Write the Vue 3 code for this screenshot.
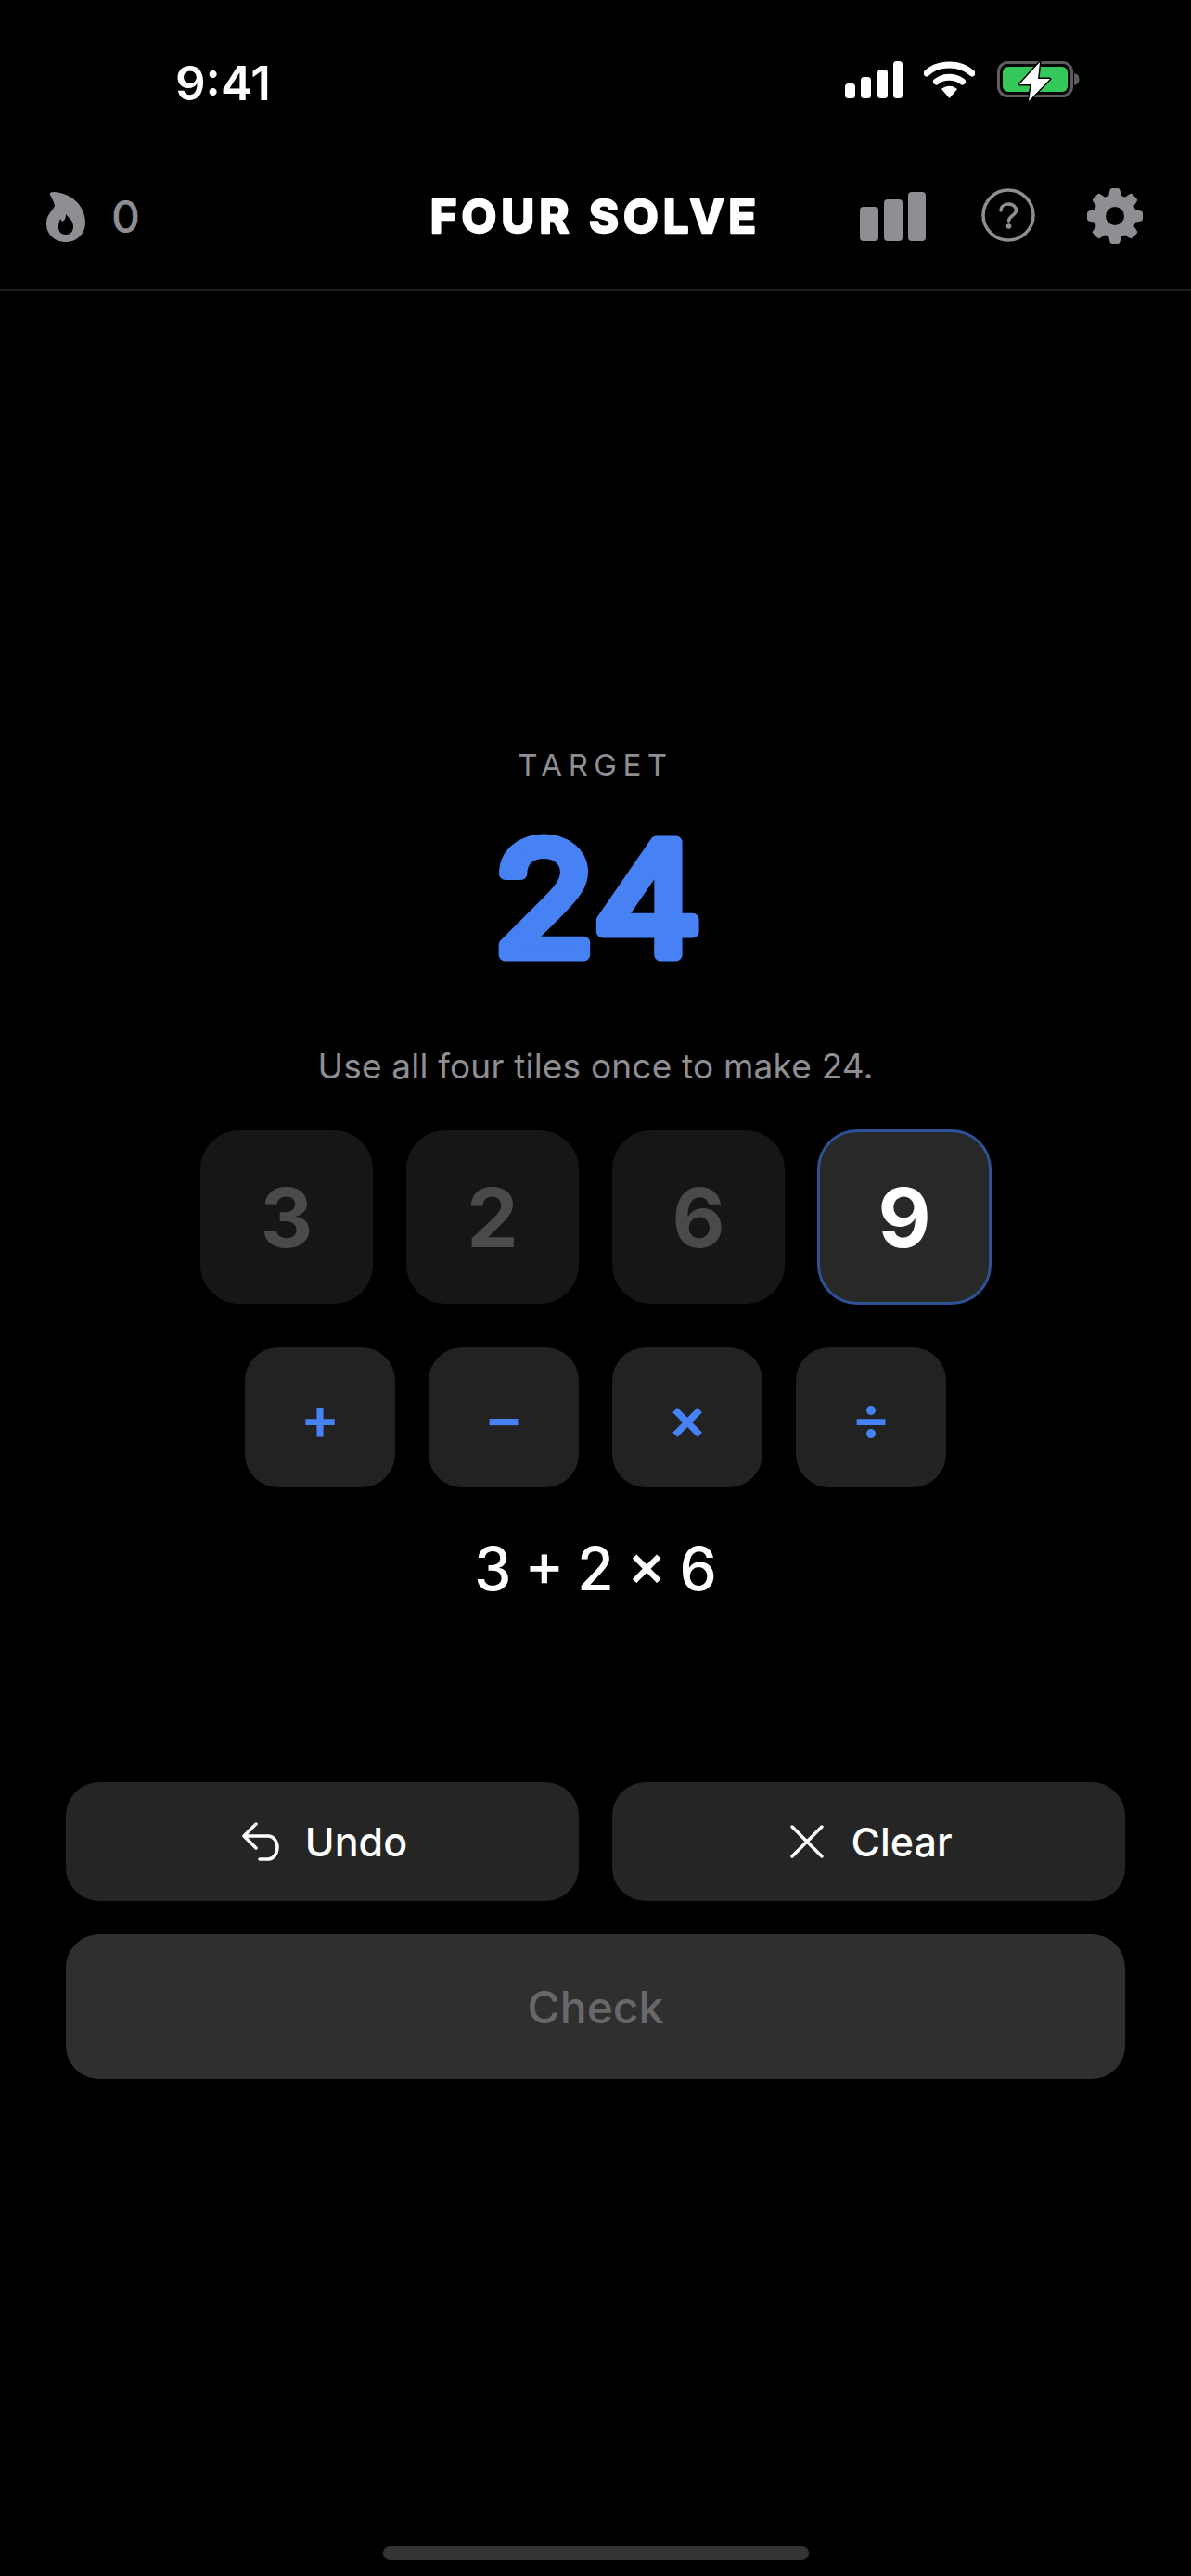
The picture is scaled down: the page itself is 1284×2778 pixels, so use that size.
<template>
  <div class="page">
    <!-- Status bar -->
    <div class="status-bar">
      <span class="clock">9:41</span>
      <div class="status-icons">
        <svg class="signal" width="62" height="40" viewBox="0 0 62 40">
          <rect x="0" y="24" width="11" height="16" rx="3.5" fill="#fff" />
          <rect x="17" y="17" width="11" height="23" rx="3.5" fill="#fff" />
          <rect x="35" y="9" width="11" height="31" rx="3.5" fill="#fff" />
          <rect x="52" y="0" width="10" height="40" rx="3.5" fill="#fff" />
        </svg>
        <svg class="wifi" width="55" height="40" viewBox="0 0 55 40">
          <path d="M3 13 C16 1 39 1 52 13" fill="none" stroke="#fff" stroke-width="7" stroke-linecap="round" />
          <path d="M13.5 22 C21 15.5 34 15.5 41.5 22" fill="none" stroke="#fff" stroke-width="7" stroke-linecap="round" />
          <path d="M19 30 C24 25.500 31 25.500 36 30 L27.500 40 Z" fill="#fff" />
        </svg>
        <svg class="battery" width="90" height="47" viewBox="0 0 90 47">
          <rect x="1.500" y="3.500" width="79" height="36" rx="10" fill="none" stroke="#5c5c5c" stroke-width="3" />
          <rect x="6" y="8" width="70" height="27" rx="6" fill="#34c759" />
          <path d="M83 15 C87 16 88.500 18 88.500 21.500 C88.500 25 87 27 83 28 Z" fill="#5c5c5c" />
          <path d="M46 3 L24 27 H37 L34 45 L57 21 H44 Z" fill="#fff" stroke="#000" stroke-width="3" stroke-linejoin="round" paint-order="stroke" />
        </svg>
      </div>
    </div>

    <!-- Header -->
    <header class="top-bar">
      <div class="streak">
        <svg width="42" height="54" viewBox="0 0 42 54">
          <path fill-rule="evenodd" fill="#8e8e93" d="M4 3 C3 1 5 0 8 0 C26 1 42 14 42 33 C42 46 32 54 21 54 C9 54 0 46 0 34 C0 25 6 21 9 15 C8 10 6 7 4 3 Z M21 46 C26 46 29 43 29 37 C29 31 25 29 21 24 C21 30 19 31 17 32 C16 31 16 30 15 29 C14 32 13 34 13 38 C13 43 16 46 21 46 Z" />
        </svg>
        <span class="streak-count">0</span>
      </div>
      <svg class="title-svg" width="380" height="64" viewBox="0 0 380 64">
        <text class="title-text" x="190" y="52" text-anchor="middle">FOUR SOLVE</text>
      </svg>
      <div class="top-actions">
        <svg class="bars" width="71" height="53" viewBox="0 0 71 53">
          <rect x="0" y="16" width="20" height="37" rx="4" fill="#8e8e93" />
          <rect x="26" y="8" width="20" height="45" rx="4" fill="#8e8e93" />
          <rect x="52" y="0" width="19" height="53" rx="4" fill="#8e8e93" />
        </svg>
        <svg class="help" width="58" height="58" viewBox="0 0 58 58">
          <circle cx="29" cy="29" r="27" fill="none" stroke="#8e8e93" stroke-width="3.500" />
          <path d="M21 24 C21 19.500 25 17 29.500 17 C34 17 37.500 20 37.500 24 C37.500 29 30 29.500 29.500 35" fill="none" stroke="#8e8e93" stroke-width="3.500" stroke-linecap="round" />
          <circle cx="29.500" cy="41" r="2.800" fill="#8e8e93" />
        </svg>
        <svg class="gear" width="60" height="60" viewBox="0 0 60 60">
          <g fill="#8e8e93">
            <path v-for="a in gearTeeth" :key="a" d="M22 14 L24.500 2 Q25 0 27 0 H33 Q35 0 35.500 2 L38 14 Z" :transform="`rotate(${a} 30 30)`" />
          </g>
          <circle cx="30" cy="30" r="16.500" fill="none" stroke="#8e8e93" stroke-width="13" />
        </svg>
      </div>
    </header>

    <!-- Game -->
    <main class="game">
      <div class="target-label">TARGET</div>
      <svg class="target-svg" width="300" height="240" viewBox="0 0 300 240">
        <text class="target-text" x="152" y="184" text-anchor="middle" textLength="226" lengthAdjust="spacingAndGlyphs">24</text>
      </svg>
      <p class="hint">Use all four tiles once to make 24.</p>

      <div class="tiles">
        <div
          v-for="tile in tiles"
          :key="tile.value"
          class="tile"
          :class="{ used: tile.used }"
        >
          {{ tile.value }}
        </div>
      </div>

      <div class="ops">
        <div v-for="op in ops" :key="op" class="op">{{ op }}</div>
      </div>

      <div class="expression">3 + 2 × 6</div>

      <div class="controls">
        <button class="ctrl">
          <svg width="40" height="42" viewBox="0 0 40 42">
            <path d="M15 2 L2 15 L15 28 M2 15 H28 C34 15 38 21 38 27 C38 34 34 40 28 40 H19" fill="none" stroke="#fff" stroke-width="3.500" stroke-linecap="round" stroke-linejoin="round" />
          </svg>
          Undo
        </button>
        <button class="ctrl">
          <svg width="38" height="38" viewBox="0 0 38 38">
            <path d="M3 3 L35 35 M35 3 L3 35" fill="none" stroke="#fff" stroke-width="3.500" stroke-linecap="round" />
          </svg>
          Clear
        </button>
      </div>
      <button class="check">Check</button>
    </main>

    <div class="home-bar"></div>
  </div>
</template>

<script setup>
const tiles = [
  { value: 3, used: true },
  { value: 2, used: true },
  { value: 6, used: true },
  { value: 9, used: false }
]
const ops = ['+', '−', '×', '÷']
const gearTeeth = [0, 45, 90, 135, 180, 225, 270, 315]
</script>

<style>
html,
body {
  background: #000;
}
</style>

<style scoped>
.page {
  width: 1284px;
  height: 2778px;
  background: #000;
  color: #fff;
  font-family: Inter, "Liberation Sans", sans-serif;
  display: flex;
  flex-direction: column;
  overflow: hidden;
}
.status-bar {
  height: 132px;
  box-sizing: border-box;
  padding: 60px 119px 0 189px;
  display: flex;
  justify-content: space-between;
  align-items: flex-start;
}
.clock {
  font-size: 51px;
  font-weight: 600;
  line-height: 60px;
}
.status-icons {
  display: flex;
  align-items: flex-start;
  margin-top: 6px;
}
.wifi {
  margin-left: 23px;
}
.battery {
  margin-left: 24px;
  margin-top: -2px;
}
.top-bar {
  height: 182px;
  box-sizing: border-box;
  border-bottom: 2px solid #1e1e1e;
  padding: 0 52px 0 50px;
  position: relative;
  display: flex;
  justify-content: space-between;
  align-items: flex-start;
}
.streak {
  display: flex;
  align-items: center;
  gap: 28px;
  margin-top: 75px;
}
.streak-count {
  font-size: 48px;
  font-weight: 500;
  color: #8e8e93;
  line-height: 54px;
}
.title-svg {
  position: absolute;
  left: 452px;
  top: 67px;
}
.title-text {
  font-family: Inter, sans-serif;
  font-size: 49px;
  font-weight: 700;
  letter-spacing: 5px;
  fill: #fff;
  stroke: #fff;
  stroke-width: 2.500px;
  stroke-linejoin: round;
}
.top-actions {
  display: flex;
  align-items: flex-start;
  margin-top: 71px;
}
.bars {
  margin-top: 4px;
}
.help {
  margin-left: 60px;
}
.gear {
  margin-left: 56px;
}
.game {
  display: flex;
  flex-direction: column;
  align-items: center;
  padding-top: 491px;
}
.target-label {
  font-size: 33px;
  line-height: 40px;
  letter-spacing: 6.500px;
  color: #8e8e93;
}
.target-svg {
  margin-top: 1px;
}
.target-text {
  font-family: Inter, sans-serif;
  font-size: 168px;
  font-weight: 400;
  fill: #4682f4;
  stroke: #4682f4;
  stroke-width: 13px;
  stroke-linejoin: round;
  stroke-linecap: round;
}
.hint {
  margin: 42px 0 0;
  font-size: 37px;
  letter-spacing: 0.200px;
  line-height: 44px;
  color: #8e8e93;
}
.tiles {
  display: flex;
  gap: 36px;
  margin-top: 47px;
}
.tile {
  width: 186px;
  height: 187px;
  box-sizing: border-box;
  border-radius: 42px;
  background: #282828;
  border: 2px solid #2f5297;
  box-shadow: 0 0 0 1px #2f5297;
  display: flex;
  align-items: center;
  justify-content: center;
  font-size: 88px;
  font-weight: 700;
}
.tile.used {
  background: #161616;
  border-color: #161616;
  box-shadow: none;
  color: #4a4a4a;
}
.ops {
  display: flex;
  gap: 36px;
  margin-top: 47px;
}
.op {
  width: 162px;
  height: 151px;
  border-radius: 36px;
  background: #222;
  color: #4682f4;
  display: flex;
  align-items: center;
  justify-content: center;
  font-size: 64px;
  font-weight: 600;
}
.expression {
  margin-top: 50px;
  font-size: 64px;
  font-weight: 500;
  line-height: 76px;
  word-spacing: -3px;
}
.controls {
  display: flex;
  gap: 36px;
  margin-top: 192px;
}
.ctrl {
  width: 553px;
  height: 128px;
  padding: 0 0 0 5px;
  border: none;
  border-radius: 36px;
  background: #252525;
  color: #fff;
  font-family: inherit;
  font-size: 43px;
  font-weight: 500;
  display: flex;
  align-items: center;
  justify-content: center;
  gap: 28px;
}
.check {
  width: 1142px;
  height: 156px;
  margin-top: 36px;
  border: none;
  border-radius: 36px;
  background: #2f2f2f;
  color: #68686a;
  font-family: inherit;
  font-size: 48px;
  font-weight: 500;
}
.home-bar {
  width: 459px;
  height: 15px;
  border-radius: 8px;
  background: #333;
  margin: auto auto 17px;
}
</style>
